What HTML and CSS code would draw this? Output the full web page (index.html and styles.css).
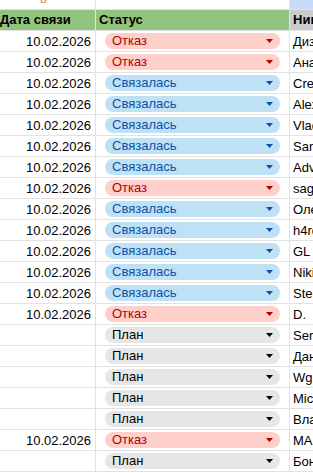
FILE: index.html
```html
<!DOCTYPE html>
<html lang="ru">
<head>
<meta charset="utf-8">
<link rel="stylesheet" href="styles.css">
</head>
<body>
<div class="sheet">
  <div class="row top">
    <div class="cell a"><span class="peek">в</span></div>
    <div class="cell b"></div>
    <div class="cell c blue"></div>
  </div>
  <div class="row head">
    <div class="cell a green"><span class="hd">Дата связи</span></div>
    <div class="cell b green"><span class="hd pad">Статус</span></div>
    <div class="cell c grey"><span class="hd pad">Ника</span></div>
  </div>
  <div id="rows"></div>
</div>
<script src="app.js"></script>
</body>
</html>
```

FILE: styles.css
```css
html, body {
  margin: 0;
  padding: 0;
  background: #fff;
}
body {
  font-family: "Liberation Sans", Arial, sans-serif;
  font-size: 13px;
  color: #000;
  width: 313px;
  height: 473px;
  overflow: hidden;
}
.sheet {
  display: flex;
  flex-direction: column;
}
.row {
  display: grid;
  grid-template-columns: 96px 194px 1fr;
  height: 21px;
  border-bottom: 0;
}
.cell {
  box-sizing: border-box;
  border-right: 1px solid #e2e2e2;
  border-bottom: 1px solid #e2e2e2;
  display: flex;
  align-items: center;
  overflow: hidden;
  white-space: nowrap;
}
.cell.c {
  border-right: 0;
}
.row.top {
  height: 10px;
}
.row.top .cell {
  align-items: flex-end;
  padding-bottom: 3px;
}
.peek {
  line-height: 15px;
  color: #e69138;
  padding-left: 40px;
}
.row.head {
  height: 21px;
}
.green {
  background: #93c47d;
}
.grey {
  background: #cccccc;
}
.blue {
  background: #c9daf8;
}
.hd {
  font-weight: bold;
  line-height: 20px;
}
.hd.pad {
  padding-left: 3px;
}
.cell.c .hd.pad,
.cell.c .name {
  padding-left: 3px;
}
.cell.a.date {
  justify-content: flex-end;
  padding-right: 4px;
}
.cell.b.st {
  padding: 0 9px;
}
.chip {
  flex: 1;
  height: 16px;
  border-radius: 8px;
  display: flex;
  align-items: center;
  justify-content: space-between;
  padding: 0 7px;
  box-sizing: border-box;
  line-height: 16px;
}
.chip svg {
  display: block;
  width: 7px;
  height: 4px;
}
.chip.no {
  background: #ffcfc9;
  color: #b10202;
}
.chip.no svg { fill: #b10202; }
.chip.yes {
  background: #bfe1f6;
  color: #0a53a8;
}
.chip.yes svg { fill: #0a53a8; }
.chip.plan {
  background: #e6e6e6;
  color: #000;
}
.chip.plan svg { fill: #000; }
```

FILE: app.js
```js
const data = [
  ["10.02.2026", "no", "Дизайн"],
  ["10.02.2026", "no", "Анастасия"],
  ["10.02.2026", "yes", "Creative"],
  ["10.02.2026", "yes", "Alexander"],
  ["10.02.2026", "yes", "Vladimir"],
  ["10.02.2026", "yes", "Sarah"],
  ["10.02.2026", "yes", "Advent"],
  ["10.02.2026", "no", "saga"],
  ["10.02.2026", "yes", "Олеся"],
  ["10.02.2026", "yes", "h4rd"],
  ["10.02.2026", "yes", "GL"],
  ["10.02.2026", "yes", "Nikita"],
  ["10.02.2026", "yes", "Stepan"],
  ["10.02.2026", "no", "D."],
  ["", "plan", "Sergey"],
  ["", "plan", "Даниил"],
  ["", "plan", "Wg"],
  ["", "plan", "Michael"],
  ["", "plan", "Владислав"],
  ["10.02.2026", "no", "MARS"],
  ["", "plan", "Бондарь"]
];
const labels = { no: "Отказ", yes: "Связалась", plan: "План" };
const host = document.getElementById("rows");
host.className = "sheet";
const arrow = '<svg viewBox="0 0 7 4"><polygon points="0,0 7,0 3.5,4"/></svg>';
for (const [date, st, name] of data) {
  const row = document.createElement("div");
  row.className = "row";
  row.innerHTML =
    '<div class="cell a date">' + date + '</div>' +
    '<div class="cell b st"><div class="chip ' + st + '"><span>' + labels[st] + '</span>' + arrow + '</div></div>' +
    '<div class="cell c"><span class="name">' + name + '</span></div>';
  host.appendChild(row);
}
```
